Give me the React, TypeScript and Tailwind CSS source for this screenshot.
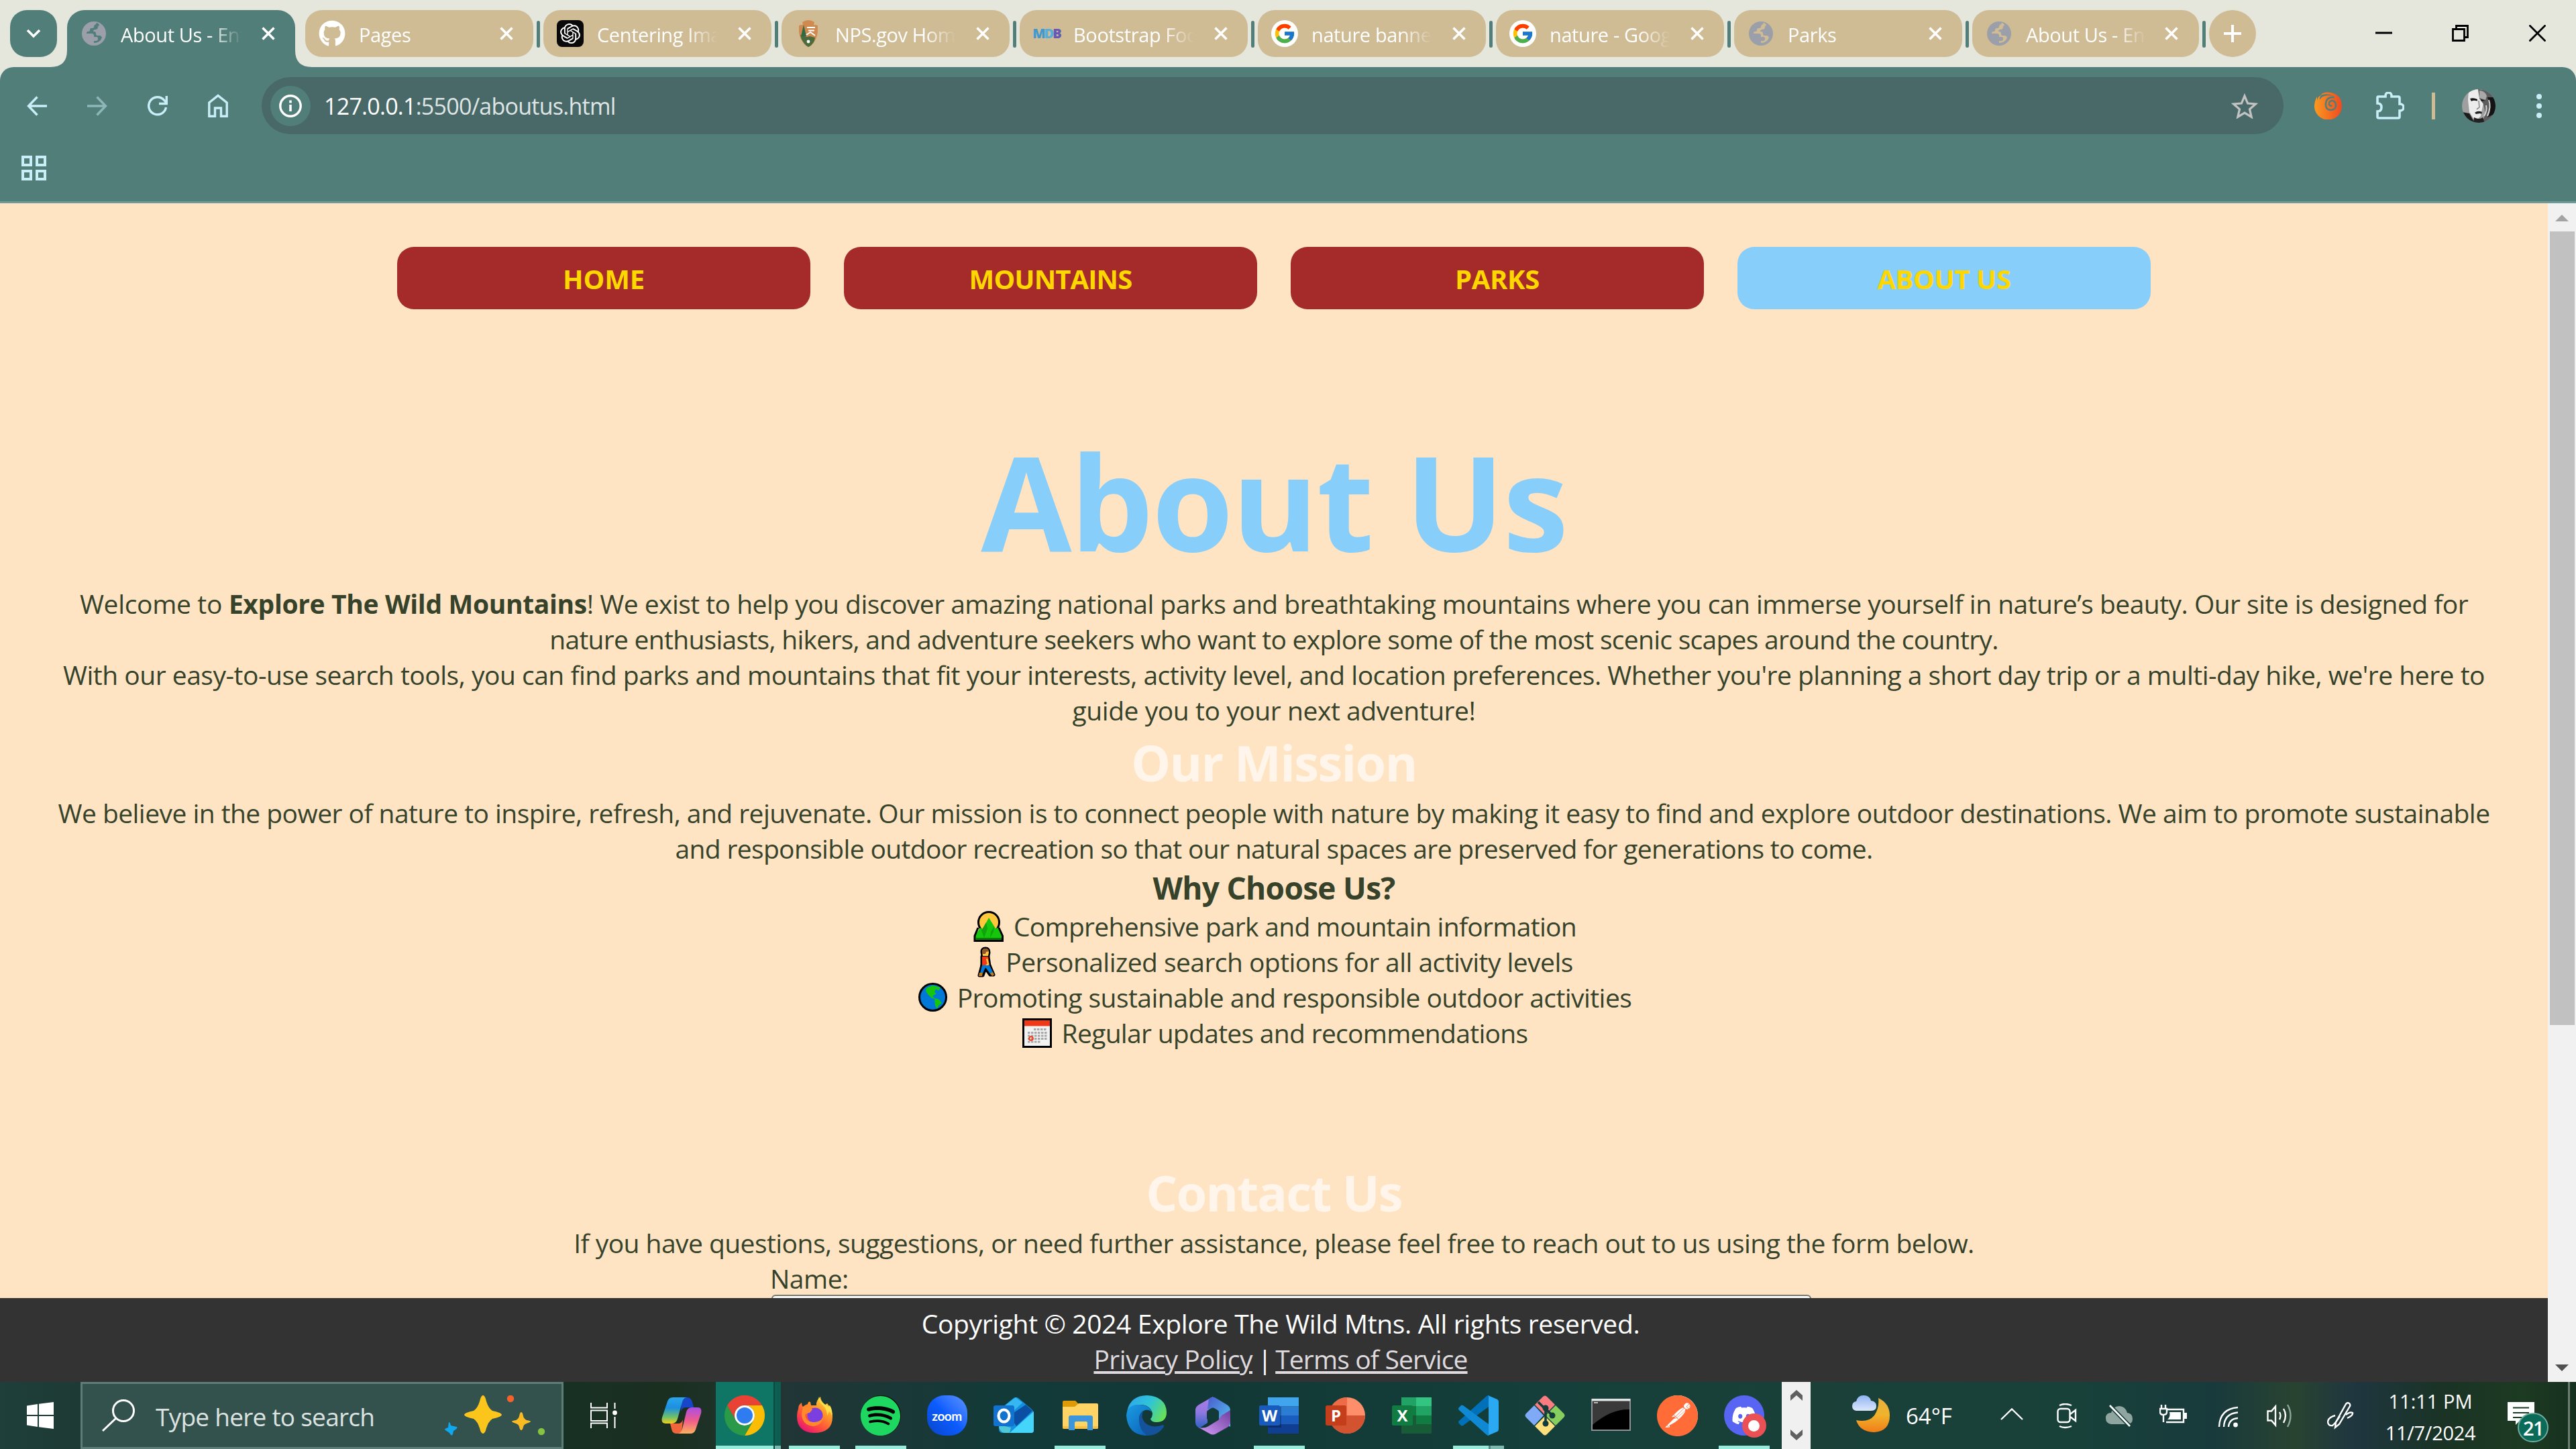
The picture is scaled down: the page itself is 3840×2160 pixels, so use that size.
import React from "react";
import type { ReactNode } from "react";
import { FaGithub, FaSpotify, FaDiscord } from "react-icons/fa";
import { FcGoogle } from "react-icons/fc";
import { SiOpenai, SiPostman } from "react-icons/si";

/* ---------- shared helpers ---------- */

function Svg({ box, className, children }: { box: string; className: string; children: ReactNode }) {
  return (
    <svg viewBox={box} className={className} fill="none">
      {children}
    </svg>
  );
}

const Cross = ({ className }: { className: string }) => (
  <Svg box="0 0 20 20" className={className}>
    <path d="M1.5 1.5l17 17M18.5 1.5l-17 17" stroke="currentColor" strokeWidth="3.6" />
  </Svg>
);

/* ---------- favicons ---------- */

const Globe = ({ land }: { land: string }) => (
  <Svg box="0 0 36 36" className="h-9 w-9">
    <circle cx="18" cy="18" r="18" fill="#9a9fa9" />
    <path
      d="M21 4q-3 1-3 4 0 2-4 2-2 0-2 3 0 2-3 2-2 0-2 3h8q3 0 3 3v2h4q2 0 2 3 0 3-3 3h-3v3q9 0 12-8-1-3-4-3h-3q-2 0-2-3 0-3-3-3h-1q0-3 3-3 4 0 4-4 0-2 2-2 0-3-4-4z"
      fill={land}
    />
  </Svg>
);

const Google = () => (
  <div className="flex h-10 w-10 items-center justify-center rounded-full bg-white">
    <FcGoogle className="h-[34px] w-[34px]" />
  </div>
);

const OpenAi = () => (
  <div className="flex h-10 w-10 items-center justify-center rounded-lg bg-[#0a0a0a]">
    <SiOpenai className="h-[30px] w-[30px] text-white" />
  </div>
);

const Nps = () => (
  <Svg box="0 0 28 40" className="h-10 w-7">
    <path d="M5 3Q14-3 23 3l-1 4q4 0 6 1 1 14-4 22-4 8-10 10Q8 38 4 30-1 22 0 8q2-1 6-1z" fill="#d08a4f" />
    <path d="M2 22q1 6 4 10 4 6 8 8 5-2 9-9l1-5-8-2-4 1z" fill="#4a6b3d" />
    <path d="M7 7l4 17H3z" fill="#2f6a44" />
    <path d="M12 11h12M14 15.500h9M11 22l6-4 7 5" stroke="#fff" strokeWidth="2" />
    <circle cx="14" cy="32" r="2.400" fill="#fff" />
  </Svg>
);

const Mdb = () => (
  <div className="flex h-10 w-10 items-center justify-center text-[20px] font-extrabold leading-none tracking-[-2px]">
    <span className="text-[#3f9ad0]">M</span>
    <span className="text-[#55aede]">D</span>
    <span className="text-[#6558b8]">B</span>
  </div>
);

/* ---------- tab strip ---------- */

function Tab({ icon, title, active, last }: { icon: ReactNode; title: string; active?: boolean; last?: boolean }) {
  return (
    <div
      className={
        "relative flex shrink-0 items-center pl-5 text-white " +
        (active
          ? "h-[85px] w-[340px] rounded-t-[26px] bg-[#527e79] pb-[15px]"
          : last
            ? "h-[70px] w-[338px] rounded-[25px] bg-[#cfbc94]"
            : "h-[70px] w-[340px] rounded-[25px] bg-[#cfbc94]")
      }
    >
      {active && (
        <>
          <Svg box="0 0 25 25" className="absolute bottom-0 left-[-25px] h-[25px] w-[25px]">
            <path d="M25 0v25H0Q25 25 25 0z" fill="#527e79" />
          </Svg>
          <Svg box="0 0 25 25" className="absolute bottom-0 right-[-25px] h-[25px] w-[25px]">
            <path d="M0 0v25h25Q0 25 0 0z" fill="#527e79" />
          </Svg>
        </>
      )}
      <div className="flex h-10 w-10 shrink-0 items-center justify-center">{icon}</div>
      <div className="ml-5 w-[184px] overflow-hidden whitespace-nowrap pt-[3px] text-[29px] leading-[52px] tracking-[-0.4px] [mask-image:linear-gradient(to_right,black_72%,transparent_98%)]">
        {title}
      </div>
      <Cross className={last ? "ml-[23px] h-5 w-5 shrink-0" : "ml-[26px] h-5 w-5 shrink-0"} />
    </div>
  );
}

const Divider = () => <div className="mx-[5px] mt-4 h-10 w-[5px] shrink-0 rounded-full bg-[#527e79]" />;

function TabStrip() {
  return (
    <div className="flex h-[100px] items-start bg-[#e5e6dc] pl-[15px] pt-[15px]">
      <div className="mr-[15px] flex h-[70px] w-[70px] items-center justify-center rounded-[25px] bg-[#527e79]">
        <Svg box="0 0 22 14" className="h-[14px] w-[22px]">
          <path d="M2 2l9 9 9-9" stroke="#fff" strokeWidth="3.6" />
        </Svg>
      </div>
      <Tab active icon={<Globe land="#527e79" />} title="About Us - Ent" />
      <div className="w-[15px] shrink-0" />
      <Tab icon={<FaGithub className="h-10 w-10" />} title="Pages" />
      <Divider />
      <Tab icon={<OpenAi />} title="Centering Ima" />
      <Divider />
      <Tab icon={<Nps />} title="NPS.gov Hom" />
      <Divider />
      <Tab icon={<Mdb />} title="Bootstrap Foo" />
      <Divider />
      <Tab icon={<Google />} title="nature banner" />
      <Divider />
      <Tab icon={<Google />} title="nature - Goog" />
      <Divider />
      <Tab icon={<Globe land="#cfbc94" />} title="Parks" />
      <Divider />
      <Tab last icon={<Globe land="#cfbc94" />} title="About Us - Ent" />
      <Divider />
      <div className="flex h-[70px] w-[70px] shrink-0 items-center justify-center rounded-full bg-[#cfbc94]">
        <Svg box="0 0 26 26" className="h-[26px] w-[26px]">
          <path d="M13 0v26M0 13h26" stroke="#fff" strokeWidth="4" />
        </Svg>
      </div>
      <div className="ml-auto mr-[45px] mt-[22px] flex text-black">
        <Svg box="0 0 25 25" className="h-[25px] w-[25px]">
          <path d="M0 12h25" stroke="currentColor" strokeWidth="3" />
        </Svg>
        <Svg box="0 0 25 25" className="ml-[89px] h-[25px] w-[25px]">
          <path d="M1.5 6.5h17v17h-17zM6.5 6V1.5h17v17H19" stroke="currentColor" strokeWidth="2.8" />
        </Svg>
        <Svg box="0 0 25 25" className="ml-[90px] h-[25px] w-[25px]">
          <path d="M.5.5l24 24M24.5.5l-24 24" stroke="currentColor" strokeWidth="2.8" />
        </Svg>
      </div>
    </div>
  );
}

/* ---------- toolbar ---------- */

const Avatar = () => (
  <Svg box="0 0 50 50" className="ml-10 h-[50px] w-[50px] shrink-0">
    <clipPath id="face">
      <circle cx="25" cy="25" r="25" />
    </clipPath>
    <g clipPath="url(#face)">
      <rect width="50" height="50" fill="#9f9f9f" />
      <path d="M10 0h20l2 20-4 20-8 8-9-14-2-18z" fill="#ececec" />
      <path d="M24 0h26v50H30l5-14-3-14-6-8z" fill="#5c5c5c" />
      <path d="M26 2q8 0 11 8l-2 6-9-3z" fill="#a8a8a8" />
      <path d="M38 12q5 12 0 30l12-6V12z" fill="#141414" />
      <path d="M40 16q4 10-2 24M36 24q2 8-3 16" stroke="#d8d8d8" strokeWidth="2" />
      <path d="M12 14q5-2 11 1v2.500q-6-1.500-9 .5zM28 15l7 2-6 1z" fill="#151515" />
      <path d="M25 17l1 10-4 3" stroke="#8a8a8a" strokeWidth="1.600" />
      <path d="M19 35q5-4 11-1l-1 3-2-1-6 1zM18 42q8 4 13 0l3 8H17z" fill="#222" />
      <path d="M0 34l11 2 8 14H0z" fill="#1c1c1c" />
    </g>
  </Svg>
);

function Toolbar() {
  return (
    <div className="bg-[#e5e6dc]">
      <div className="h-[203px] rounded-t-[20px] border-b-[3px] border-[#6f9a98] bg-[#527e79] text-[#c9eef8]">
        <div className="flex h-[115px] items-center pl-10">
          <Svg box="0 0 30 30" className="h-[30px] w-[30px] shrink-0">
            <path d="M15.5 1.5L2.5 15l13 13.5M2.5 15H30" stroke="currentColor" strokeWidth="3.4" />
          </Svg>
          <Svg box="0 0 30 30" className="ml-[60px] h-[30px] w-[30px] shrink-0 opacity-50">
            <path d="M14.5 1.5L27.5 15l-13 13.5M27.5 15H0" stroke="currentColor" strokeWidth="3.4" />
          </Svg>
          <Svg box="0 0 30 30" className="ml-[60px] h-[30px] w-[30px] shrink-0">
            <path d="M27.5 17A13 13 0 1 1 24.500 6.200L28 10" stroke="currentColor" strokeWidth="3.4" />
            <path d="M28.300 0v11.500H17" stroke="currentColor" strokeWidth="3.4" />
          </Svg>
          <Svg box="0 0 30 35" className="ml-[60px] h-[35px] w-[30px] shrink-0">
            <path d="M1.800 33.200V13L15 2.500 28.200 13v20.200h-8.700V21h-9v12.200z" stroke="currentColor" strokeWidth="3.4" />
          </Svg>
          <div className="ml-[50px] flex h-[85px] w-[3014px] shrink-0 items-center rounded-full bg-[#486967] pl-[13px] pr-[38px]">
            <div className="flex h-[60px] w-[60px] items-center justify-center rounded-full bg-[#527e79]">
              <Svg box="0 0 34 34" className="h-[34px] w-[34px]">
                <circle cx="17" cy="17" r="15.2" stroke="#fff" strokeWidth="3.4" />
                <path d="M17 15v10M17 8.500v4" stroke="#fff" strokeWidth="3.6" />
              </Svg>
            </div>
            <div className="ml-5 whitespace-nowrap text-[34px] leading-[60px] tracking-[-0.75px]">
              <span className="text-white">127.0.0.1</span>
              <span className="text-[#dfe5e5]">:5500/aboutus.html</span>
            </div>
            <Svg box="0 0 40 38" className="ml-auto h-[38px] w-10">
              <path
                d="M20 4l4.600 11 11.900 1-9 7.800 2.700 11.600L20 29.200 9.800 35.400l2.700-11.600-9-7.800 11.900-1z"
                stroke="#c3c3c3"
                strokeWidth="3.2"
              />
            </Svg>
          </div>
          <Svg box="0 0 41 41" className="ml-[46px] h-[41px] w-[41px] shrink-0">
            <defs>
              <linearGradient id="swirl" x1="0" x2="1">
                <stop stopColor="#fb9a1e" />
                <stop offset="1" stopColor="#ee4a22" />
              </linearGradient>
            </defs>
            <path
              d="M4 7Q0 14 0 22a20.500 20 0 0 0 41-1Q41 5 25 1 14-1 9 5q10-4 19 1Q12 3 8 12q-1-3 2-7-5 2-6 8z"
              fill="url(#swirl)"
            />
            <path d="M30 8q-12-1-13 9-1 10 8 10 8-1 7-8-1-6-6-6-5 1-4 6 2 3 4 1" stroke="#527e79" strokeWidth="2.6" />
          </Svg>
          <Svg box="0 0 42 41" className="ml-[51px] h-[41px] w-[42px] shrink-0">
            <path
              d="M2 8.500q0-1.500 1.500-1.500H14V5.500a4.500 4.500 0 0 1 9 0V7h10q2 0 2 2v9h1a5 5 0 0 1 0 10h-1v9q0 2-2 2H4q-2 0-2-2v-8q6 0 6-6t-6-6z"
              stroke="currentColor"
              strokeWidth="3.6"
            />
          </Svg>
          <div className="ml-[41px] h-10 w-[5px] shrink-0 bg-[#cfbc94]" />
          <Avatar />
          <div className="ml-[61px] flex shrink-0 flex-col gap-[6px]">
            <div className="h-2 w-2 rounded-full bg-[#c9eef8]" />
            <div className="h-2 w-2 rounded-full bg-[#c9eef8]" />
            <div className="h-2 w-2 rounded-full bg-[#c9eef8]" />
          </div>
        </div>
        <div className="grid w-fit grid-cols-2 gap-[5px] pl-8 pt-[17px]">
          <div className="h-4 w-4 border-4 border-[#c9eef8]" />
          <div className="h-4 w-4 border-4 border-[#c9eef8]" />
          <div className="h-4 w-4 border-4 border-[#c9eef8]" />
          <div className="h-4 w-4 border-4 border-[#c9eef8]" />
        </div>
      </div>
    </div>
  );
}

/* ---------- list emoji ---------- */

const Mountain = () => (
  <Svg box="0 0 45 46" className="mr-[15px] h-[46px] w-[45px]">
    <circle cx="23" cy="17" r="15.5" fill="#ffc83d" stroke="#000" strokeWidth="3" />
    <path d="M2 44.500V38L10 25l4 2 9-17 10 16 4-1 6.500 13v6.500z" fill="#16c60c" />
    <path d="M7 25L2 37v7.500h41.500V37L38 25" stroke="#000" strokeWidth="3" />
    <path d="M3.500 40h38.500v3H3.500z" fill="#0b7d07" />
    <path d="M19 17l-7 12 4 11 5-14zM31 23l-5 8-1 9 5-9z" fill="#13a10e" />
  </Svg>
);

const Walker = () => (
  <Svg box="0 0 28 46" className="mr-[15px] h-[46px] w-7">
    <g stroke="#000" strokeWidth="5" strokeLinejoin="round">
      <path d="M8 8q0-5 5-5t5 6l-1 5H9z" />
      <path d="M8 15h9l2 14H8z" />
      <path d="M8 28h11l6 14h-5l-7-10-4 11H4z" />
    </g>
    <path d="M8 8q0-5 5-5t5 6l-1 5H9z" fill="#ffc83d" />
    <path d="M8 8q0-5 5-5t5 4l-4 1-1 3H8z" fill="#8e562e" />
    <path d="M8 15h9l2 14H8z" fill="#f03a17" />
    <path d="M15 18l2 8-5 5" stroke="#ffc83d" strokeWidth="2.6" />
    <path d="M8 28h11l6 12-4 2-8-11-4 9H5z" fill="#0078d7" />
    <path d="M4 39h5l-1 5H3zM20 40l4-2 2 4-3 2z" fill="#c47a1a" />
  </Svg>
);

const Earth = () => (
  <Svg box="0 0 43 43" className="mr-[15px] h-[43px] w-[43px]">
    <circle cx="21.5" cy="21.5" r="20" fill="#0078d7" stroke="#000" strokeWidth="3" />
    <path d="M12 8l9-4 12 3-3 5-4-3-2 5 3 2-6 4 4 4-5-1-6-6-3-5z" fill="#16c60c" />
    <path d="M24 23l7 2 4 5-5 4-2 5-3-5z" fill="#16c60c" />
  </Svg>
);

const Calendar = () => (
  <Svg box="0 0 44 44" className="mr-[15px] h-11 w-11">
    <rect x="1.5" y="1.5" width="41" height="41" fill="#f2f2f2" stroke="#000" strokeWidth="3" />
    <path d="M3 3h38v8.500H3z" fill="#f03a17" />
    <path d="M17 16.500h20M8 21.500h29M8 26h29M8 30.500h29M8 35h20" stroke="#a8a8a8" strokeWidth="3" strokeDasharray="3.5 1.5" />
    <circle cx="13" cy="30" r="2.8" stroke="#f03a17" strokeWidth="2" />
  </Svg>
);

/* ---------- page ---------- */

const navItem = "flex h-[93px] w-[616px] items-center justify-center rounded-[25px] pt-[2px] text-[40px] font-bold text-[#ffd700] ";
const line = "flex h-[53px] items-center justify-center whitespace-pre text-[39px] leading-[53px] ";

function Page() {
  return (
    <div className="flex h-[1757px] bg-[#ffe4c4]">
      <div className="flex w-[3798px] flex-col">
        <div className="h-[1632px] overflow-hidden pt-[65px] text-[#36432a]">
          <nav className="flex justify-center gap-[50px]">
            <a className={navItem + "bg-[#a52a2a] tracking-[-0.2px]"}>HOME</a>
            <a className={navItem + "bg-[#a52a2a] tracking-[-0.9px]"}>MOUNTAINS</a>
            <a className={navItem + "bg-[#a52a2a] tracking-[-0.3px]"}>PARKS</a>
            <a className={navItem + "bg-[#87cefa] tracking-[-0.4px]"}>ABOUT US</a>
          </nav>
          <h1 className="mt-[145px] h-[267px] text-center text-[196px] font-bold leading-[281px] tracking-[-2.2px] text-[#87cefa]">
            About Us
          </h1>
          <p className={line + "tracking-[-0.53px]"}>
            <span className="tracking-[-0.32px]">Welcome to </span>
            <strong className="tracking-[-0.36px]">Explore The Wild Mountains</strong>
            <span>
              ! We exist to help you discover amazing national parks and breathtaking mountains where you can immerse
              yourself in nature’s beauty. Our site is designed for
            </span>
          </p>
          <p className={line + "tracking-[-0.72px]"}>
            nature enthusiasts, hikers, and adventure seekers who want to explore some of the most scenic scapes around
            the country.
          </p>
          <p className={line + "tracking-[-0.495px]"}>
            With our easy-to-use search tools, you can find parks and mountains that fit your interests, activity level,
            and location preferences. Whether you're planning a short day trip or a multi-day hike, we're here to
          </p>
          <p className={line + "tracking-[-0.44px]"}>guide you to your next adventure!</p>
          <h2 className="h-[100px] text-center text-[74px] font-bold leading-[104px] tracking-[-1.6px] text-[#fff5ea]">
            Our Mission
          </h2>
          <p className={line + "tracking-[-0.547px]"}>
            We believe in the power of nature to inspire, refresh, and rejuvenate. Our mission is to connect people with
            nature by making it easy to find and explore outdoor destinations. We aim to promote sustainable
          </p>
          <p className={line + "tracking-[-0.654px]"}>
            and responsible outdoor recreation so that our natural spaces are preserved for generations to come.
          </p>
          <h3 className="h-[63px] text-center text-[46px] font-bold leading-[65px] tracking-[-0.7px]">Why Choose Us?</h3>
          <ul className="pl-[3px]">
            <li className={line + "tracking-[-0.7px]"}>
              <Mountain />
              Comprehensive park and mountain information
            </li>
            <li className={line + "tracking-[-0.55px]"}>
              <Walker />
              Personalized search options for all activity levels
            </li>
            <li className={line + "tracking-[-0.55px]"}>
              <Earth />
              Promoting sustainable and responsible outdoor activities
            </li>
            <li className={line + "tracking-[-0.7px]"}>
              <Calendar />
              Regular updates and recommendations
            </li>
          </ul>
          <h2 className="mt-[160px] h-[100px] text-center text-[74px] font-bold leading-[104px] tracking-[-1.9px] text-[#fff5ea]">
            Contact Us
          </h2>
          <p className={line + "tracking-[-0.55px]"}>
            If you have questions, suggestions, or need further assistance, please feel free to reach out to us using the
            form below.
          </p>
          <div className="ml-[1150px] w-[1550px]">
            <div className="-ml-[2px] h-[51px] text-[39px] leading-[53px] tracking-[-0.5px]">Name:</div>
            <div className="h-[60px] rounded-[6px] border-2 border-[#76766c] bg-white" />
          </div>
        </div>
        <footer className="h-[125px] bg-[#333] pl-5 pt-[11px] text-white">
          <p className={line + "tracking-[-0.36px]"}>Copyright © 2024 Explore The Wild Mtns. All rights reserved.</p>
          <p className={line}>
            <a className="tracking-[-0.5px] text-[#dedade] underline decoration-4 underline-offset-[3px]">Privacy Policy</a>
            <span className="tracking-[-2.5px]"> | </span>
            <a className="tracking-[-0.85px] text-[#dedade] underline decoration-4 underline-offset-[3px]">
              Terms of Service
            </a>
          </p>
        </footer>
      </div>
      <div className="flex w-[42px] flex-col items-center bg-[#f1f1f1]">
        <Svg box="0 0 20 10" className="mt-[17px] h-[10px] w-5">
          <path d="M0 10L10 0l10 10z" fill="#a3a3a3" />
        </Svg>
        <div className="mt-[15px] h-[1183px] w-[37px] bg-[#c1c1c1]" />
        <Svg box="0 0 20 10" className="mb-4 mt-auto h-[10px] w-5">
          <path d="M0 0l10 10L20 0z" fill="#505050" />
        </Svg>
      </div>
    </div>
  );
}

/* ---------- taskbar icons ---------- */

const app = "h-[60px] w-[60px]";

const Copilot = () => (
  <Svg box="0 0 60 60" className={app}>
    <defs>
      <linearGradient id="cpA" x1="0" x2="0" y1="0" y2="1">
        <stop stopColor="#2aa5ea" />
        <stop offset=".4" stopColor="#1c8fe0" />
        <stop offset=".75" stopColor="#6fc06a" />
        <stop offset="1" stopColor="#f5cc1a" />
      </linearGradient>
      <linearGradient id="cpB" x1="0" x2="0" y1="0" y2="1">
        <stop stopColor="#a94ee6" />
        <stop offset=".5" stopColor="#ee5b8c" />
        <stop offset="1" stopColor="#fdb15c" />
      </linearGradient>
    </defs>
    <path d="M30 3h8q6 0 8 7l2 8H36q-5 0-7 6z" fill="#1746c9" />
    <path d="M30 57h-8q-6 0-7-7l-2-8h12q5 0 7-6z" fill="#f0653a" />
    <path d="M17 3h21q-5 0-7 7l-7 25q-2 7-8 7H6q-7 0-5-9L9 9q2-6 8-6z" fill="url(#cpA)" />
    <path d="M43 57H24q5 0 7-7l6-25q2-7 8-7h9q7 0 5 9l-8 24q-2 6-8 6z" fill="url(#cpB)" />
  </Svg>
);

const Chrome = () => (
  <Svg box="0 0 60 60" className={app}>
    <path d="M4 15A30 30 0 0 1 56 15H30A15 15 0 0 0 17 37.500Z" fill="#e94235" />
    <path d="M56 15A30 30 0 0 1 30 60L43 37.500A15 15 0 0 0 30 15Z" fill="#fbbc04" />
    <path d="M30 60A30 30 0 0 1 4 15L17 37.500A15 15 0 0 0 43 37.500Z" fill="#2a9a48" />
    <circle cx="30" cy="30" r="15" fill="#fff" />
    <circle cx="30" cy="30" r="12" fill="#2f7bf0" />
  </Svg>
);

const Firefox = () => (
  <Svg box="0 0 60 60" className={app}>
    <defs>
      <linearGradient id="ffA" x1="0.9" x2="0.2" y1="0" y2="1">
        <stop stopColor="#fff44f" />
        <stop offset=".35" stopColor="#ff9a26" />
        <stop offset=".7" stopColor="#ff4a3f" />
        <stop offset="1" stopColor="#e2107c" />
      </linearGradient>
    </defs>
    <path d="M6 20q0-6 5-9 0 4 2 6 3-3 7-4 1-5 4-3l1 5h8q-1-7 6-13 0 6 7 12l3-2q8 9 8 20 0 24-28 24Q4 55 4 31q0-6 2-11z" fill="url(#ffA)" />
    <path d="M36 2q0 8 8 14 5 6 5 14l3-6q4 3 4 8 2-9-3-17l-2 2Q38 10 36 2z" fill="#ffe04a" />
    <circle cx="31" cy="30" r="11.5" fill="#7b3fe0" />
    <path d="M13 17q9-3 14 4l-4 5q-6 1-7 3 2 12 14 11 10-1 12-7 0 11-13 13Q12 45 11 28z" fill="#ff8a2b" />
  </Svg>
);

const ZoomApp = () => (
  <div className="flex h-[60px] w-[60px] items-center justify-center rounded-[26px] bg-linear-to-tr from-[#0a45c9] via-[#0b5cff] to-[#5b93ff] font-['Lato'] text-[19px] font-bold leading-none tracking-[-0.5px] text-white">
    zoom
  </div>
);

const Outlook = () => (
  <Svg box="0 0 60 60" className={app}>
    <path d="M8 22L30 4q4-2 7 0l19 16q4 3 4 8v24q0 4-4 4H14q-6 0-6-6z" fill="#1490df" />
    <path d="M16 16L33 3l10 8-17 16z" fill="#35b8f1" />
    <path d="M24 30L48 14l10 9-24 23z" fill="#0a4fa3" />
    <path d="M24 56l36-32v28q0 4-4 4z" fill="#45d4fa" />
    <path d="M8 44l18 4-2 8h-8q-8-2-8-12z" fill="#50c8d8" />
    <rect y="15" width="31" height="31" rx="3" fill="#1173cf" />
    <ellipse cx="15.5" cy="30.5" rx="8" ry="9" stroke="#fff" strokeWidth="4.2" />
  </Svg>
);

const Explorer = () => (
  <Svg box="0 0 60 60" className={app}>
    <path d="M4 10q0-2 2-2h17l5 5v7H4z" fill="#e09a06" />
    <path d="M4 17h18l6-5h27q2 0 2 2v34q0 2-2 2H6q-2 0-2-2z" fill="#ffd464" />
    <path d="M4 46h53v2q0 2-2 2H6q-2 0-2-2z" fill="#f6c146" />
    <path d="M13 52V33q0-3 3-3h30q3 0 3 3v19h-8V41q0-2-2-2H24q-2 0-2 2v11z" fill="#3d96dc" />
  </Svg>
);

const Edge = () => (
  <Svg box="0 0 60 60" className={app}>
    <defs>
      <linearGradient id="edA" x1="0" x2="1" y1=".3" y2=".7">
        <stop stopColor="#2fa8ea" />
        <stop offset=".5" stopColor="#2fc5d6" />
        <stop offset="1" stopColor="#6be052" />
      </linearGradient>
      <linearGradient id="edB" x1="0" x2=".8" y1="0" y2="1">
        <stop stopColor="#1b9de2" />
        <stop offset="1" stopColor="#0c63bb" />
      </linearGradient>
    </defs>
    <path d="M1 24Q6 0 31 0q28 2 29 25 0 15-15 15-8 0-9-5 3-3 3-8Q36 14 20 14 6 14 1 24z" fill="url(#edA)" />
    <path d="M0 30q1-16 18-16 17 0 20 11-4-4-10-3-9 3-9 14 2 14 16 22-4 2-7 2Q2 58 0 30z" fill="url(#edB)" />
    <path d="M19 37q-1-9 6-13-4 10 3 17 10 9 27 3 2 1 0 4-8 12-24 12-12-8-12-23z" fill="#14529c" />
  </Svg>
);

const Office = () => (
  <Svg box="0 0 60 60" className={app}>
    <defs>
      <linearGradient id="ofA" x1="0" x2="0" y1="0" y2="1">
        <stop stopColor="#b07be6" />
        <stop offset=".5" stopColor="#8f78e0" />
        <stop offset="1" stopColor="#2f62c4" />
      </linearGradient>
      <linearGradient id="ofB" x1="0" x2="1" y1="0" y2="1">
        <stop stopColor="#4a5ccc" />
        <stop offset="1" stopColor="#55c6f5" />
      </linearGradient>
      <linearGradient id="ofC" x1="0" x2="1" y1="1" y2="0">
        <stop stopColor="#d59cf8" />
        <stop offset="1" stopColor="#6e3f9e" />
      </linearGradient>
    </defs>
    <path d="M30 2L9 14q-5 3-5 8v18q0 6 6 9l12-8V24l10-7z" fill="url(#ofA)" />
    <path d="M24 5q6-5 12 0l15 9q5 3 5 9v24L38 34V24L22 20z" fill="url(#ofB)" />
    <path d="M56 22v18q0 5-5 8l-16 9q-5 3-10 0L9 48q9 2 16-3l13-8 5-7z" fill="url(#ofC)" />
    <path d="M21 25q0-2 2-3l5-3q2-1 4 0l5 3q2 1 2 3v9q0 2-2 3l-5 3q-2 1-4 0l-5-3q-2-1-2-3z" fill="#123a38" />
  </Svg>
);

function OfficeTile({ bands, front, letter }: { bands: string[]; front: string; letter: string }) {
  return (
    <Svg box="0 0 60 60" className={app}>
      {bands.map((c, i) => (
        <rect key={c} x="13" y={3 + i * 13.5} width="46" height="13.5" fill={c} />
      ))}
      <path d="M13 17h20v31H13z" fill="#000" opacity=".25" />
      <rect y="15" width="31" height="30" rx="2.5" fill={front} />
      <text x="15.5" y="39" textAnchor="middle" fontSize="24" fontWeight="700" fill="#fff" fontFamily="Open Sans">
        {letter}
      </text>
    </Svg>
  );
}

const PowerPoint = () => (
  <Svg box="0 0 60 60" className={app}>
    <circle cx="32" cy="30" r="27" fill="#ff8f6b" />
    <path d="M32 3v27H5A27 27 0 0 1 32 3z" fill="#ed6c47" />
    <path d="M5 30h54a27 27 0 0 1-54 0z" fill="#d35230" />
    <rect y="15" width="31" height="30" rx="2.5" fill="#c43e1c" />
    <text x="15.5" y="39" textAnchor="middle" fontSize="24" fontWeight="700" fill="#fff" fontFamily="Open Sans">
      P
    </text>
  </Svg>
);

const Excel = () => (
  <Svg box="0 0 60 60" className={app}>
    <path d="M14 3h22v13H14z" fill="#21a366" />
    <path d="M36 3h23v13H36z" fill="#33c481" />
    <path d="M14 16h22v14H14z" fill="#107c41" />
    <path d="M36 16h23v14H36z" fill="#21a366" />
    <path d="M36 30h23v13H36z" fill="#107c41" />
    <path d="M14 30h22v13h23v14H14z" fill="#185c37" />
    <rect y="15" width="31" height="30" rx="2.5" fill="#107c41" />
    <text x="15.5" y="39" textAnchor="middle" fontSize="24" fontWeight="700" fill="#fff" fontFamily="Open Sans">
      X
    </text>
  </Svg>
);

const VsCode = () => (
  <Svg box="0 0 60 60" className={app}>
    <path d="M45 0v17L7 45q-2 1-3 0l-3-3q-2-2 0-4L41 2q2-2 4-2z" fill="#0070b8" />
    <path d="M45 60V43L7 15q-2-1-3 0l-3 3q-2 2 0 4l40 36q2 2 4 2z" fill="#1089d4" />
    <path d="M44 0l14 6q2 1 2 4v40q0 3-2 4l-14 6q2-2 1-4V4q1-2-1-4z" fill="#2aa9f2" />
  </Svg>
);

const Git = () => (
  <Svg box="0 0 60 60" className={app}>
    <path d="M27 2q3-3 6 0l12 12-15 15L15 14z" fill="#fb7c80" />
    <path d="M14 15l14 15-14 15L2 33q-3-3 0-6z" fill="#7eaaf8" />
    <path d="M46 15l12 12q3 3 0 6L46 45 31 30z" fill="#86cf5e" />
    <path d="M30 31l15 15-12 12q-3 3-6 0L15 46z" fill="#fbe07c" />
    <path d="M20 10l11 11v22M31 20l10 10" stroke="#143c3a" strokeWidth="3.6" />
    <circle cx="31" cy="19" r="4.5" fill="#143c3a" />
    <circle cx="41" cy="30" r="4.5" fill="#143c3a" />
    <circle cx="31" cy="42" r="4.5" fill="#143c3a" />
  </Svg>
);

const Terminal = () => (
  <Svg box="0 0 60 60" className={app}>
    <rect x="1" y="6" width="57" height="46" fill="#000" stroke="#8e9294" strokeWidth="2" />
    <path d="M2 29V8h55v13Q30 20 2 44z" fill="#3a3a3a" />
    <path d="M1 5h57v3.500H1z" fill="#dfe3e4" />
    <path d="M4 11h6" stroke="#bbb" strokeWidth="2" />
  </Svg>
);

const Postman = () => (
  <div className="flex h-[60px] w-[60px] items-center justify-center rounded-full bg-white">
    <SiPostman className="h-[61px] w-[61px] shrink-0 text-[#ff6c37]" />
  </div>
);

const Discord = () => (
  <div className="relative flex h-[60px] w-[60px] items-center justify-center rounded-full bg-[#5865f2]">
    <FaDiscord className="h-[38px] w-[38px] text-white" />
    <div className="absolute left-[27px] top-[27px] flex h-9 w-9 items-center justify-center rounded-full bg-[#ea5054]">
      <div className="h-[17px] w-[17px] rounded-full bg-white" />
    </div>
  </div>
);

function Cell({ children, open, stacked }: { children: ReactNode; open?: boolean; stacked?: boolean }) {
  return (
    <div className="flex h-[100px] w-[99px] shrink-0 flex-col items-center pt-5">
      {children}
      {open && (
        <div className="mt-[15px] flex h-[5px] w-[76px]">
          <div className="h-full grow bg-[#98eadb]" />
          {stacked && <div className="h-full w-[23px] border-l-[3px] border-[#4f8a82] bg-[#7cb8ae]" />}
        </div>
      )}
    </div>
  );
}

const Sparkles = () => (
  <Svg box="0 0 150 60" className="ml-auto h-[60px] w-[150px]">
    <path d="M57 0q3 0 5 9 3 10 9 14 14 3 14 6t-14 6q-6 4-9 14-2 8-5 8t-5-8q-3-10-9-14-14-3-14-6t14-6q6-4 9-14 2-9 5-9z" fill="#fcc51c" />
    <path d="M114 25q2 0 3 6 1 4 5 6 6 1 6 2t-6 3q-4 1-5 5-1 5-3 5t-3-5q-1-4-5-5-6-2-6-3t6-2q4-2 5-6 1-6 3-6z" fill="#fabb22" />
    <path d="M6 40q2 0 3 5l9 2q2 2-5 6l-1 5q-2 4-5-2l-6-4q-3-2 4-4z" fill="#0fa8ee" />
    <circle cx="98" cy="5" r="5.2" fill="#f2622a" />
    <circle cx="144" cy="54" r="5.2" fill="#86c440" />
  </Svg>
);

function Taskbar() {
  return (
    <div className="flex h-[100px] bg-[linear-gradient(to_right,#1e3f3a_0px,#1e3a34_120px,#183024_850px,#1b2f20_1000px,#213636_1180px,#123a38_1500px,#123836_1800px,#143f3a_2300px,#1a4038_2700px,#18413a_3100px,#183a3c_3300px,#294331_3420px,#1f3640_3510px,#1a3325_3640px,#1d3a22_3760px,#16301f_3840px)] text-white">
      <div className="flex w-[120px] shrink-0 items-center justify-center">
        <Svg box="0 0 40 40" className="h-10 w-10">
          <path d="M0 5.500L16 3v16H0zM18 2.700L40 0v19H18zM0 21h16v16L0 34.500zM18 21h22v19l-22-2.700z" fill="#fff" />
        </Svg>
      </div>
      <div className="flex w-[720px] shrink-0 items-center border-[3px] border-[#5f7d77] bg-[#34524d] pl-[29px] pr-[24px]">
        <Svg box="0 0 50 50" className="h-[50px] w-[50px]">
          <circle cx="32" cy="18" r="15.5" stroke="#fff" strokeWidth="3" />
          <path d="M21 29L1 48" stroke="#fff" strokeWidth="3" />
        </Svg>
        <div className="ml-[30px] whitespace-nowrap pt-[3px] text-[37px] leading-[50px] tracking-[-0.75px] text-[#dbe2e0]">
          Type here to search
        </div>
        <Sparkles />
      </div>
      <div className="flex w-[120px] shrink-0 items-center justify-center">
        <Svg box="0 0 40 38" className="h-[38px] w-10">
          <path d="M1 0v7.500h24V0M1 38v-7.500h24V38M1 11.500h24v15.500H1zM36.500 0v9M36.500 21v17" stroke="#fff" strokeWidth="2" />
          <circle cx="36.5" cy="15" r="3.4" fill="#fff" />
        </Svg>
      </div>
      <div className="w-[107px] shrink-0 pl-[26px] pt-5">
        <Copilot />
      </div>
      <div className="flex w-[86px] shrink-0 flex-col items-center bg-[#0f7565] pt-5">
        <Chrome />
        <div className="mt-[15px] h-[5px] w-full bg-[#98eadb]" />
      </div>
      <div className="flex w-[11px] shrink-0 flex-col justify-end border-l-2 border-[#0a4a40] bg-[#0d5d50]">
        <div className="h-[5px] bg-[#7cb8ae]" />
      </div>
      <Cell open>
        <Firefox />
      </Cell>
      <Cell open>
        <div className="flex h-[60px] w-[60px] items-center justify-center rounded-full bg-black">
          <FaSpotify className="h-[61px] w-[61px] shrink-0 text-[#1ed760]" />
        </div>
      </Cell>
      <Cell>
        <ZoomApp />
      </Cell>
      <Cell>
        <Outlook />
      </Cell>
      <Cell open>
        <Explorer />
      </Cell>
      <Cell>
        <Edge />
      </Cell>
      <Cell>
        <Office />
      </Cell>
      <Cell open>
        <OfficeTile bands={["#41a5ee", "#2b7cd3", "#1a5dbe", "#103f91"]} front="#185abd" letter="W" />
      </Cell>
      <Cell>
        <PowerPoint />
      </Cell>
      <Cell>
        <Excel />
      </Cell>
      <Cell open stacked>
        <VsCode />
      </Cell>
      <Cell>
        <Git />
      </Cell>
      <Cell>
        <Terminal />
      </Cell>
      <Cell>
        <Postman />
      </Cell>
      <Cell open>
        <Discord />
      </Cell>
      <div className="ml-[7px] flex w-[43px] shrink-0 flex-col items-center bg-[#f0f0f0] text-[#606060]">
        <Svg box="0 0 18 16" className="mt-3 h-4 w-[18px]">
          <path d="M0 8l9-8 9 8v8L9 8l-9 8z" fill="currentColor" />
        </Svg>
        <Svg box="0 0 18 16" className="mb-[13px] mt-auto h-4 w-[18px]">
          <path d="M0 8l9 8 9-8V0L9 8 0 0z" fill="currentColor" />
        </Svg>
      </div>
      <Svg box="0 0 56 56" className="ml-[62px] mt-5 h-14 w-14 shrink-0">
        <defs>
          <linearGradient id="moon" x1="0" x2="0" y1="0" y2="1">
            <stop stopColor="#e5b040" />
            <stop offset=".5" stopColor="#f0b32c" />
            <stop offset="1" stopColor="#f17c18" />
          </linearGradient>
          <linearGradient id="cloud" x1="0" x2="0" y1="0" y2="1">
            <stop stopColor="#8fb4f4" />
            <stop offset="1" stopColor="#dbe7fb" />
          </linearGradient>
        </defs>
        <path d="M39 4q17 8 17 26 0 24-24 25Q11 54 6 37q18 4 27-7 8-12 6-26z" fill="url(#moon)" />
        <path d="M6 23q-6-1-6-7t6-7Q8 0 17 0t11 8q8 1 8 8 0 7-8 7z" fill="url(#cloud)" />
      </Svg>
      <div className="ml-6 w-[68px] shrink-0 whitespace-nowrap text-[33px] leading-[102px]">64°F</div>
      <Svg box="0 0 34 18" className="ml-[73px] mt-[39px] h-[18px] w-[34px] shrink-0">
        <path d="M1 17L17 1.500 33 17" stroke="#fff" strokeWidth="2.4" />
      </Svg>
      <Svg box="0 0 30 38" className="ml-[50px] mt-8 h-[38px] w-[30px] shrink-0">
        <rect x="1.5" y="8" width="18" height="20" rx="4" stroke="#fff" strokeWidth="2.4" />
        <path d="M20 16l8-6v16l-8-6M4 3q8-4 18 0M4 34q8 4 18 0" stroke="#fff" strokeWidth="2.4" />
      </Svg>
      <Svg box="0 0 40 34" className="ml-[43px] mt-[34px] h-[34px] w-10 shrink-0">
        <path d="M8 29q-8-1-8-9t8-8Q11 2 20 2t12 10q8 1 8 9t-8 8z" fill="#8fa5a0" />
        <path d="M6 1l30 31" stroke="#18403a" strokeWidth="6" />
        <path d="M6 1l30 31" stroke="#fff" strokeWidth="2.6" />
      </Svg>
      <Svg box="0 0 41 30" className="ml-10 mt-[34px] h-[30px] w-[41px] shrink-0">
        <path d="M3 0v5M9 0v5M1 6h10v5q0 4-5 4t-5-4zM6 15v11" stroke="#fff" strokeWidth="2.4" />
        <path d="M11 7h25v19H10" stroke="#fff" strokeWidth="2.4" />
        <path d="M15 11h17v11H12q5-4 3-11zM37 12h4v9h-4z" fill="#fff" />
      </Svg>
      <Svg box="0 0 32 33" className="ml-[46px] mt-9 h-[33px] w-8 shrink-0">
        <path d="M2 31Q3 4 30 2M9 31Q10 11 30 9.500M16 31q1-12 14-13" stroke="#fff" strokeWidth="2.4" />
        <circle cx="26.5" cy="28" r="3.4" fill="#fff" />
      </Svg>
      <Svg box="0 0 40 38" className="ml-[41px] mt-[31px] h-[38px] w-10 shrink-0">
        <path d="M1.500 12.500H7l6-7v28l-6-7H1.500z" stroke="#fff" strokeWidth="2.4" />
        <path d="M19 14q3 5 0 11M25 9q6 10 0 21" stroke="#fff" strokeWidth="2.4" />
        <path d="M31 3q9 16 0 33" stroke="#8ea59b" strokeWidth="2.4" />
      </Svg>
      <Svg box="0 0 40 42" className="ml-[50px] mt-[29px] h-[42px] w-10 shrink-0">
        <path d="M13 31L28 4q2-3 5-1 2 2 1 4L18 34l-6 5z" stroke="#fff" strokeWidth="2.4" />
        <path d="M12 21q-11 3-11 10 1 6 7 5 5-4 11-14M28 20q6-5 10-3 1 4-8 8" stroke="#fff" strokeWidth="2.4" />
      </Svg>
      <div className="ml-[44px] w-[140px] shrink-0 pt-[5px] text-center text-[29px] leading-[47px]">
        <div>11:11 PM</div>
        <div className="tracking-[-0.3px]">11/7/2024</div>
      </div>
      <div className="relative ml-[45px] mt-[30px] h-[34px] w-10 shrink-0">
        <Svg box="0 0 40 40" className="h-10 w-10">
          <path d="M0 0h40v28H18l-6 6V28H0z" fill="#fff" />
          <path d="M8 8.500h24M8 16h24M8 23h16" stroke="#1d3a22" strokeWidth="2.2" />
        </Svg>
        <div className="absolute left-[15px] top-[16px] flex h-[44px] w-[46px] items-center justify-center rounded-full border-2 border-[#6fae9f] bg-[#0b6b58] text-[29px] font-semibold leading-none tracking-[-1.5px]">
          21
        </div>
      </div>
      <div className="ml-auto mr-[9px] w-[3px] shrink-0 bg-[#6b7d6f]" />
    </div>
  );
}

export default function App() {
  return (
    <div className="h-[2160px] w-[3840px] overflow-hidden font-['Open_Sans','Noto_Sans',sans-serif]">
      <TabStrip />
      <Toolbar />
      <Page />
      <Taskbar />
    </div>
  );
}
